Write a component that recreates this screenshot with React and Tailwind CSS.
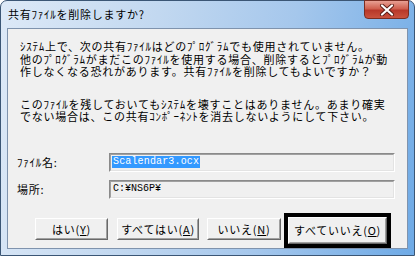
export default function App() {
  const jp = "font-['Noto_Sans_CJK_JP',sans-serif] text-[11px] tracking-[0.75px] text-black";
  return (
    <div className="w-[415px] h-[256px] overflow-hidden bg-white">
      <div className="w-[415px] h-[256px] rounded-t-[7px] border border-[#3b5675] bg-[linear-gradient(100deg,#dde9f7_0%,#c2d8f0_35%,#a5c7ec_65%,#6eaae6_100%)] flex flex-col">
        {/* Title bar */}
        <div className="h-[27px] flex items-start justify-between shrink-0">
          <div className={`${jp} pl-[7px] pt-[7px] leading-[12px] whitespace-nowrap`}>共有ﾌｧｲﾙを削除しますか?</div>
          <div className="-mt-px mr-[5px] w-[45px] h-[19px] rounded-b-[4px] border border-[#7a2d22] bg-[linear-gradient(180deg,#e8a093_0%,#d0604f_45%,#b8382a_55%,#c9523e_100%)] flex items-center justify-center">
            <svg width="16" height="12" viewBox="0 0 16 12">
              <path d="M3 1.5 L13 10.5 M13 1.5 L3 10.5" stroke="#5a1d15" strokeWidth="4" strokeLinecap="round" />
              <path d="M3 1.5 L13 10.5 M13 1.5 L3 10.5" stroke="#ffffff" strokeWidth="2.2" strokeLinecap="round" />
            </svg>
          </div>
        </div>
        {/* Client */}
        <div className="mx-[6px] mb-[6px] flex-1 border border-[#7f93ad] bg-[#f0f0f0] flex flex-col pl-[9px] pt-[11px]">
          <div className={`${jp} pl-[3px] leading-[12.5px] whitespace-nowrap`}>
            <div>ｼｽﾃﾑ上で、次の共有ﾌｧｲﾙはどのﾌﾟﾛｸﾞﾗﾑでも使用されていません。</div>
            <div>他のﾌﾟﾛｸﾞﾗﾑがまだこのﾌｧｲﾙを使用する場合、削除するとﾌﾟﾛｸﾞﾗﾑが動</div>
            <div>作しなくなる恐れがあります。共有ﾌｧｲﾙを削除してもよいですか？</div>
          </div>
          <div className={`${jp} pl-[3px] mt-[20px] leading-[12.5px] whitespace-nowrap`}>
            <div>このﾌｧｲﾙを残しておいてもｼｽﾃﾑを壊すことはありません。あまり確実</div>
            <div>でない場合は、この共有ｺﾝﾎﾟｰﾈﾝﾄを消去しないようにして下さい。</div>
          </div>
          {/* Row 1 */}
          <div className="mt-[30px] flex items-center h-[19px]">
            <div className={`${jp} w-[92px] leading-[12px]`}>ﾌｧｲﾙ名:</div>
            <div className="w-[286px] h-[19px] border border-t-[#8a8a8a] border-l-[#8a8a8a] border-b-white border-r-white">
              <div className="h-full border border-t-[#a0a0a0] border-l-[#a0a0a0] border-b-[#e3e3e3] border-r-[#e3e3e3] flex items-center pl-px">
                <span className="bg-[#3399ff] text-white font-['Liberation_Mono',monospace] text-[10px] tracking-[0.15px] leading-[12px] px-px">Scalendar3.ocx</span>
              </div>
            </div>
          </div>
          {/* Row 2 */}
          <div className="mt-[8px] flex items-center h-[19px]">
            <div className={`${jp} w-[92px] leading-[12px]`}>場所:</div>
            <div className="w-[286px] h-[19px] border border-t-[#8a8a8a] border-l-[#8a8a8a] border-b-white border-r-white">
              <div className="h-full border border-t-[#a0a0a0] border-l-[#a0a0a0] border-b-[#e3e3e3] border-r-[#e3e3e3] flex items-center pl-[2px]">
                <span className="text-black font-['Liberation_Mono',monospace] text-[10px] leading-[12px]">C:¥NS6P¥</span>
              </div>
            </div>
          </div>
          {/* Buttons */}
          <div className="mt-[14px] flex items-start ml-[18px]">
            <Btn cls="mt-[5px] w-[73px] h-[22px]">
              <span className={`${jp} leading-[12px]`}>はい(<span className="underline">Y</span>)</span>
            </Btn>
            <Btn cls="mt-[5px] ml-[9px] w-[82px] h-[22px]">
              <span className={`${jp} leading-[12px]`}>すべてはい(<span className="underline">A</span>)</span>
            </Btn>
            <Btn cls="mt-[5px] ml-[8px] w-[74px] h-[22px]">
              <span className={`${jp} leading-[12px]`}>いいえ(<span className="underline">N</span>)</span>
            </Btn>
            <div className="ml-[3px] w-[107px] h-[35px] border-[4px] border-black">
              <Btn cls="w-full h-full">
                <span className={`${jp} leading-[12px]`}>すべていいえ(<span className="underline">O</span>)</span>
              </Btn>
            </div>
          </div>
        </div>
      </div>
    </div>
  );
}

function Btn({ cls, children }) {
  return (
    <div className={`${cls} border border-t-white border-l-white border-b-[#696969] border-r-[#696969] bg-[#f0f0f0]`}>
      <div className="h-full border border-t-[#f0f0f0] border-l-[#f0f0f0] border-b-[#a0a0a0] border-r-[#a0a0a0] flex items-center justify-center">
        {children}
      </div>
    </div>
  );
}
